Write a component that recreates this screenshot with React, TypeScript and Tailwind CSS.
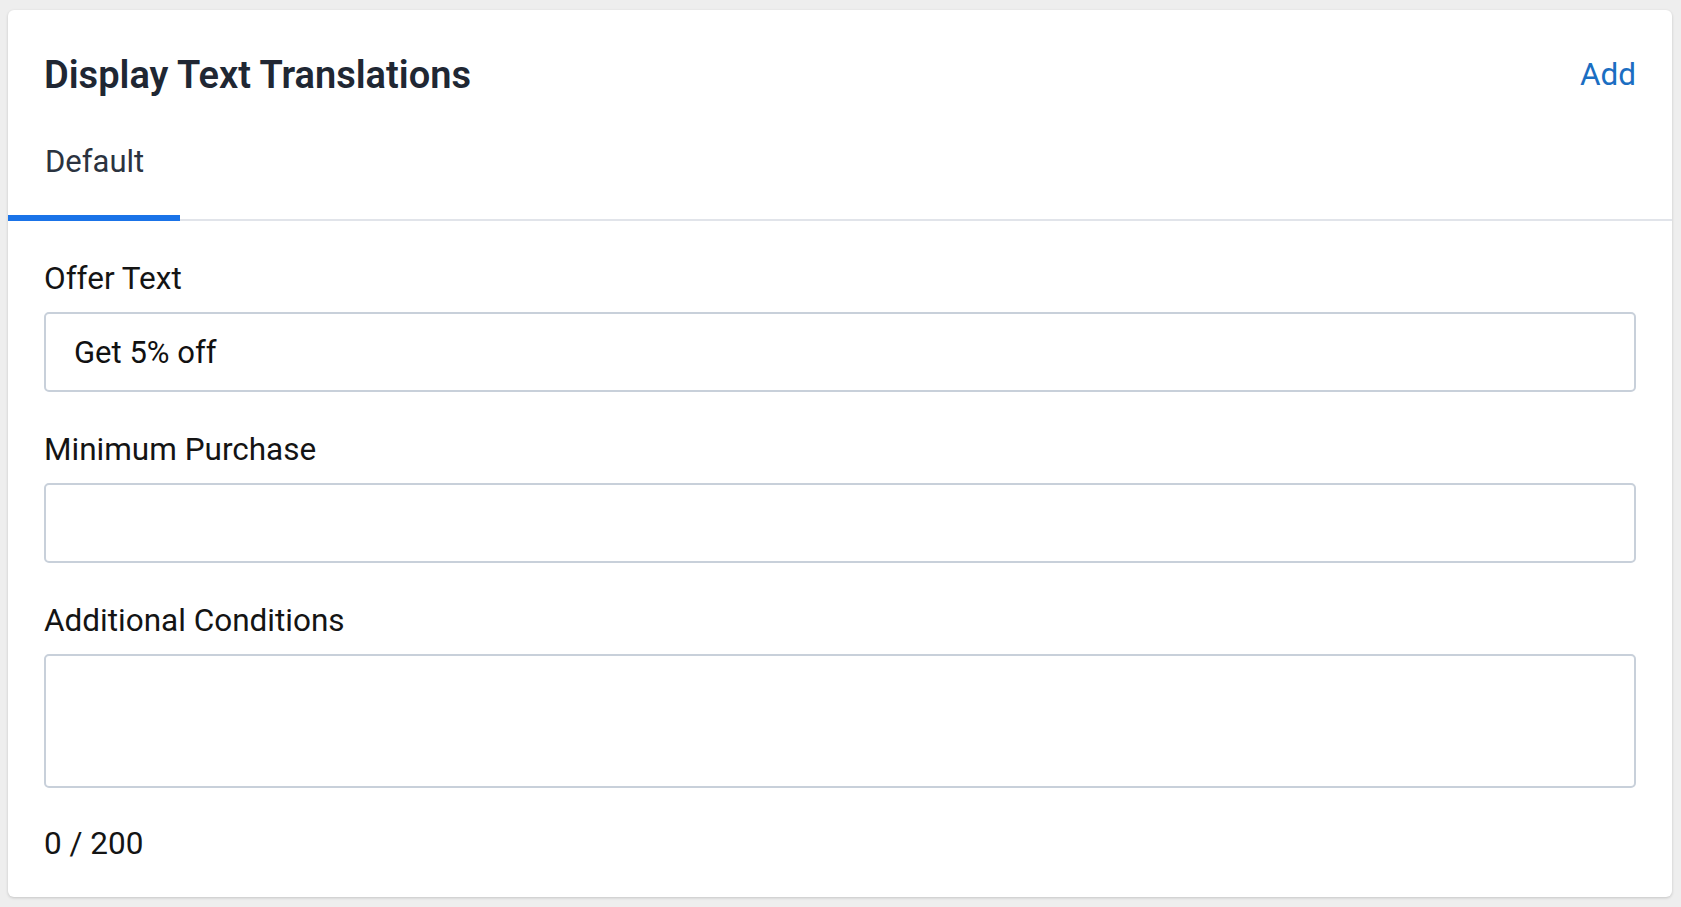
import React from "react";

export default function App() {
  return (
    <div
      className="min-h-screen bg-[#eeeeee] pt-[10px] pb-[10px] pl-[8px] pr-[9px]"
      style={{ fontFamily: "Roboto, 'Noto Sans', Arial, sans-serif" }}
    >
      <div className="bg-white rounded-[6px] shadow-[0_1px_3px_rgba(0,0,0,0.18)]">
        <div className="flex items-start justify-between px-[36px] pt-[43px]">
          <h2 className="text-[38px] leading-[44px] font-semibold text-[#202733]">
            Display Text Translations
          </h2>
          <button className="mt-[4px] text-[31.5px] leading-[36px] text-[#1b6ec2] cursor-pointer">
            Add
          </button>
        </div>
        <div className="mt-[47px] flex border-b-2 border-[#e1e4ea]">
          <div className="w-[172px] pl-[37px] pb-[35px] -mb-[2px] border-b-[6px] border-[#1a73e8] text-[31px] leading-[36px] text-[#2b3340]">
            Default
          </div>
        </div>
        <div className="px-[36px] pt-[40px] pb-[35px] text-[#141414]">
          <div className="flex flex-col gap-[40px]">
            <div>
              <label className="block text-[31.5px] leading-[36px] mb-[15px]">Offer Text</label>
              <input
                className="block w-full h-[80px] border-2 border-[#c8d0da] rounded-[5px] pl-[28px] pr-[28px] text-[31px] text-[#111111] outline-none"
                defaultValue="Get 5% off"
                style={{ fontFamily: "Roboto, sans-serif" }}
              />
            </div>
            <div>
              <label className="block text-[31.5px] leading-[36px] mb-[15px]">Minimum Purchase</label>
              <input
                className="block w-full h-[80px] border-2 border-[#c8d0da] rounded-[5px] pl-[28px] pr-[28px] text-[31px] text-[#111111] outline-none"
                defaultValue=""
                style={{ fontFamily: "Roboto, sans-serif" }}
              />
            </div>
            <div>
              <label className="block text-[31.5px] leading-[36px] mb-[15px]">Additional Conditions</label>
              <textarea
                className="block w-full h-[134px] border-2 border-[#c8d0da] rounded-[5px] px-[28px] py-[16px] text-[31px] text-[#111111] outline-none resize-none"
                defaultValue=""
                style={{ fontFamily: "Roboto, sans-serif" }}
              />
            </div>
          </div>
          <div className="mt-[38px] text-[31.5px] leading-[36px]">0 / 200</div>
        </div>
      </div>
    </div>
  );
}
